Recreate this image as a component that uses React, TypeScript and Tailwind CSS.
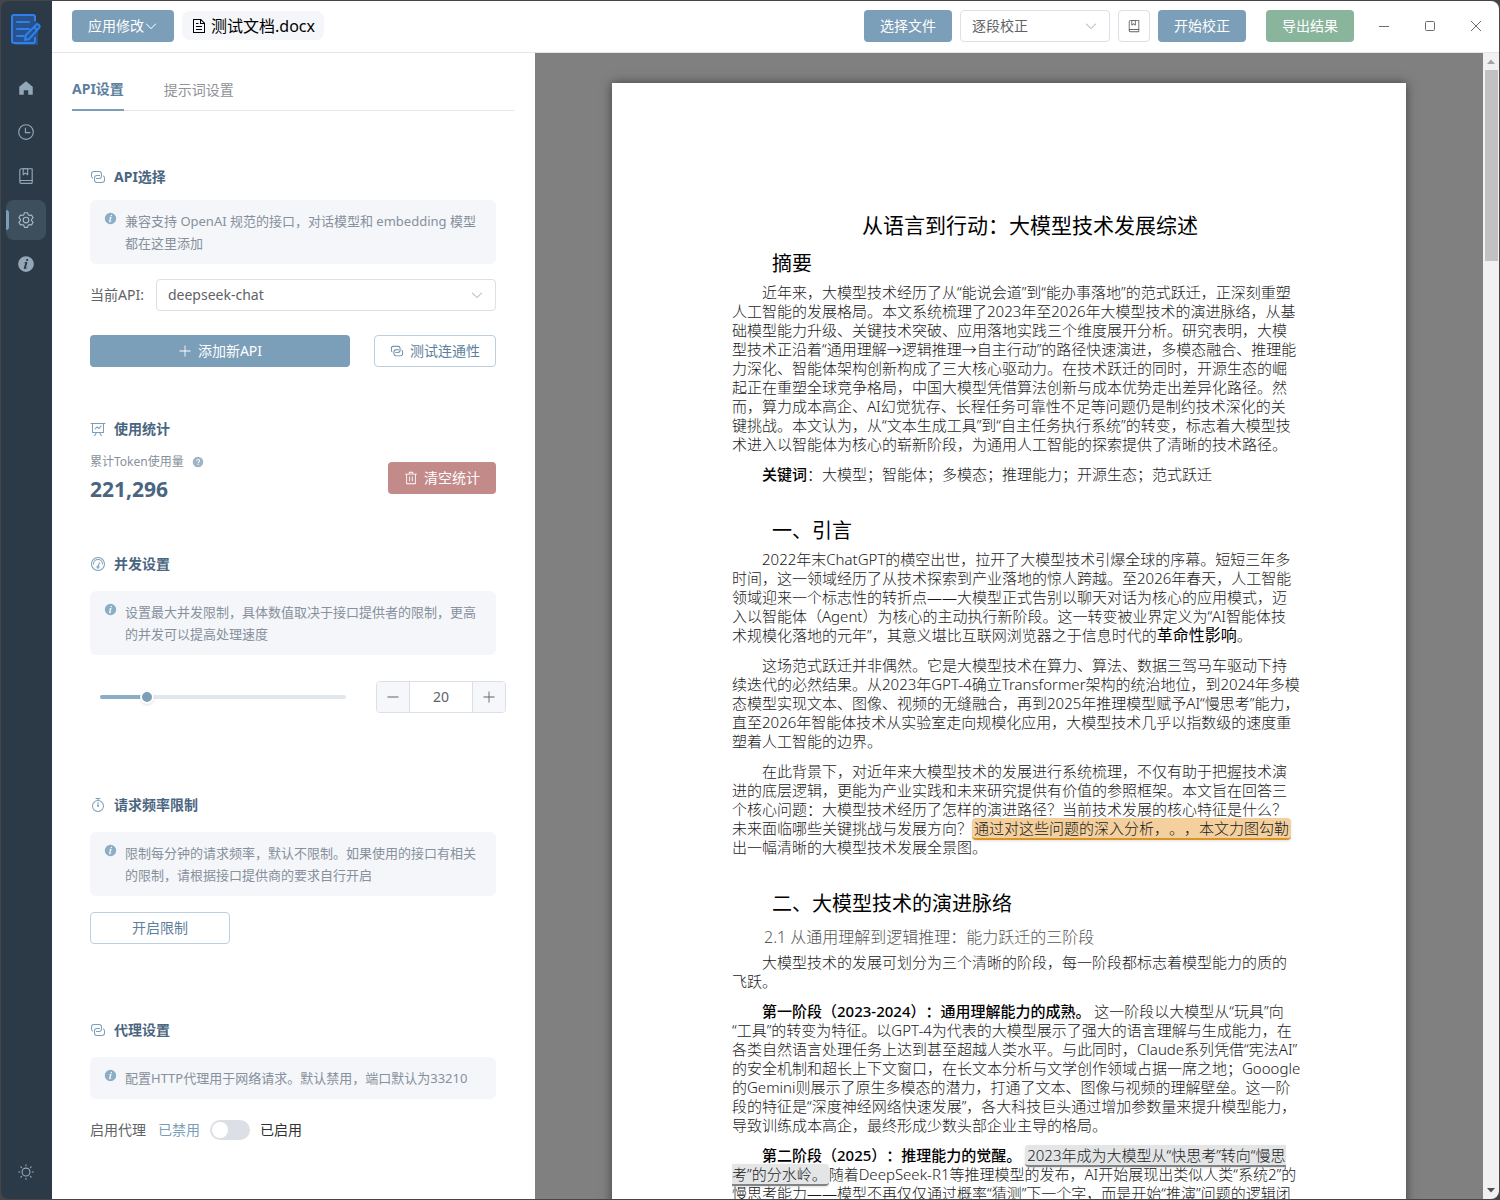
import React, { useState } from 'react';

interface IconProps {
  d: string[];
  size?: number;
  className?: string;
}

const icons = {
  arrowDown: ['M831.872 340.864 512 652.672 192.128 340.864a30.592 30.592 0 0 0-42.752 0 29.12 29.12 0 0 0 0 41.6L489.664 714.24a32 32 0 0 0 44.672 0l340.288-331.712a29.12 29.12 0 0 0 0-41.728 30.592 30.592 0 0 0-42.752 0z'],
  home: ['M512 128 128 447.936V896h255.936V640H640v256h255.936V447.936z'],
  clock: [
    'M512 896a384 384 0 1 0 0-768 384 384 0 0 0 0 768m0 64a448 448 0 1 1 0-896 448 448 0 0 1 0 896',
    'M480 256a32 32 0 0 1 32 32v256a32 32 0 0 1-64 0V288a32 32 0 0 1 32-32',
    'M480 512h256q32 0 32 32t-32 32H480q-32 0-32-32t32-32',
  ],
  collection: [
    'M192 736h640V128H256a64 64 0 0 0-64 64zm64-672h608a32 32 0 0 1 32 32v672a32 32 0 0 1-32 32H160l-32 57.536V192A128 128 0 0 1 256 64',
    'M240 800a48 48 0 1 0 0 96h592v-96zm0-64h656v160a64 64 0 0 1-64 64H240a112 112 0 0 1 0-224m144-608v250.88l96-76.8 96 76.8V128zm-64-64h320v381.44a32 32 0 0 1-51.968 24.96L480 384l-108.032 86.4A32 32 0 0 1 320 445.44z',
  ],
  setting: [
    'M600.704 64a32 32 0 0 1 30.464 22.208l35.2 109.376c14.784 7.232 28.928 15.36 42.432 24.512l112.384-24.192a32 32 0 0 1 34.432 15.36L944.32 364.8a32 32 0 0 1-4.032 37.504l-77.12 85.12a357.12 357.12 0 0 1 0 49.024l77.12 85.248a32 32 0 0 1 4.032 37.504l-88.704 153.6a32 32 0 0 1-34.432 15.296L708.8 803.904c-13.44 9.088-27.648 17.28-42.368 24.512l-35.264 109.376A32 32 0 0 1 600.704 960H423.296a32 32 0 0 1-30.464-22.208L357.696 828.48a351.616 351.616 0 0 1-42.56-24.64l-112.32 24.256a32 32 0 0 1-34.432-15.36L79.68 659.2a32 32 0 0 1 4.032-37.504l77.12-85.248a357.12 357.12 0 0 1 0-48.896l-77.12-85.248A32 32 0 0 1 79.68 364.8l88.704-153.6a32 32 0 0 1 34.432-15.296l112.32 24.256c13.568-9.152 27.776-17.408 42.56-24.64l35.2-109.312A32 32 0 0 1 423.232 64H600.64zm-23.424 64H446.72l-36.352 113.088-24.512 11.968a294.113 294.113 0 0 0-34.816 20.096l-22.656 15.36-116.224-25.088-65.28 113.152 79.68 88.192-1.92 27.136a293.12 293.12 0 0 0 0 40.192l1.92 27.136-79.808 88.192 65.344 113.152 116.224-25.024 22.656 15.296a294.113 294.113 0 0 0 34.816 20.096l24.512 11.968L446.72 896h130.688l36.48-113.152 24.448-11.904a288.282 288.282 0 0 0 34.752-20.096l22.592-15.296 116.288 25.024 65.28-113.152-79.744-88.192 1.92-27.136a293.12 293.12 0 0 0 0-40.256l-1.92-27.136 79.808-88.128-65.344-113.152-116.288 24.96-22.592-15.232a287.616 287.616 0 0 0-34.752-20.096l-24.448-11.904L577.344 128zM512 320a192 192 0 1 1 0 384 192 192 0 0 1 0-384m0 64a128 128 0 1 0 0 256 128 128 0 0 0 0-256',
  ],
  info: [
    'M512 64a448 448 0 1 1 0 896.064A448 448 0 0 1 512 64m67.2 275.072c33.28 0 60.288-23.104 60.288-57.344s-27.072-57.344-60.288-57.344c-33.28 0-60.16 23.104-60.16 57.344s26.88 57.344 60.16 57.344M590.912 699.2c0-6.848 2.368-24.64 1.024-34.752l-52.608 60.544c-10.88 11.456-24.512 19.392-30.912 17.28a12.992 12.992 0 0 1-8.256-14.72l87.68-276.992c7.168-35.136-12.544-67.2-54.336-71.296-44.096 0-108.992 44.736-148.48 101.504 0 6.784-1.28 23.68.064 33.792l52.544-60.608c10.88-11.328 23.552-19.328 29.952-17.152a12.8 12.8 0 0 1 7.808 16.128L388.48 728.576c-10.048 32.256 8.96 63.872 55.04 71.04 67.84 0 107.904-43.648 147.456-100.416z',
  ],
  sunny: [
    'M512 704a192 192 0 1 0 0-384 192 192 0 0 0 0 384m0 64a256 256 0 1 1 0-512 256 256 0 0 1 0 512m0-704a32 32 0 0 1 32 32v64a32 32 0 0 1-64 0V96a32 32 0 0 1 32-32m0 768a32 32 0 0 1 32 32v64a32 32 0 1 1-64 0v-64a32 32 0 0 1 32-32M195.2 195.2a32 32 0 0 1 45.248 0l45.248 45.248a32 32 0 1 1-45.248 45.248L195.2 240.448a32 32 0 0 1 0-45.248zm543.104 543.104a32 32 0 0 1 45.248 0l45.248 45.248a32 32 0 0 1-45.248 45.248l-45.248-45.248a32 32 0 0 1 0-45.248M64 512a32 32 0 0 1 32-32h64a32 32 0 0 1 0 64H96a32 32 0 0 1-32-32m768 0a32 32 0 0 1 32-32h64a32 32 0 1 1 0 64h-64a32 32 0 0 1-32-32M195.2 828.8a32 32 0 0 1 0-45.248l45.248-45.248a32 32 0 0 1 45.248 45.248L240.448 828.8a32 32 0 0 1-45.248 0zm543.104-543.104a32 32 0 0 1 0-45.248l45.248-45.248a32 32 0 0 1 45.248 45.248l-45.248 45.248a32 32 0 0 1-45.248 0',
  ],
  connection: [
    'M640 384v64H448a128 128 0 0 0-128 128v128a128 128 0 0 0 128 128h320a128 128 0 0 0 128-128V576a128 128 0 0 0-64-110.848V394.88c74.56 26.368 128 97.472 128 181.056v128a192 192 0 0 1-192 192H448a192 192 0 0 1-192-192V576a192 192 0 0 1 192-192z',
    'M384 640v-64h192a128 128 0 0 0 128-128V320a128 128 0 0 0-128-128H256a128 128 0 0 0-128 128v128a128 128 0 0 0 64 110.848v70.272A192.064 192.064 0 0 1 64 448V320a192 192 0 0 1 192-192h320a192 192 0 0 1 192 192v128a192 192 0 0 1-192 192z',
  ],
  dataLine: [
    'M359.168 768H160a32 32 0 0 1-32-32V192H64a32 32 0 0 1 0-64h896a32 32 0 1 1 0 64h-64v544a32 32 0 0 1-32 32H665.216l110.848 192h-73.856L591.36 768H433.024L322.176 960H248.32zM832 192H192v512h640zM342.656 534.656a32 32 0 1 1-45.312-45.312L444.992 341.76l125.44 94.08L679.04 300.032a32 32 0 1 1 49.92 39.936L581.632 524.224 451.008 426.24 342.656 534.592z',
  ],
  question: [
    'M512 64a448 448 0 1 1 0 896 448 448 0 0 1 0-896m23.744 191.488c-52.096 0-92.928 14.784-123.2 44.352-30.976 29.568-45.76 70.4-45.76 122.496h80.256c0-29.568 5.632-52.8 17.6-68.992 13.376-19.712 35.2-28.864 66.176-28.864 23.936 0 42.944 6.336 56.32 19.712 12.672 13.376 19.712 31.68 19.712 54.912 0 17.6-6.336 34.496-19.008 49.984l-8.448 9.856c-45.76 40.832-73.216 70.4-82.368 89.408-9.856 19.008-14.08 42.24-14.08 68.992v9.856h80.96v-9.856c0-16.896 3.52-31.68 10.56-45.76 6.336-12.672 15.488-24.64 28.16-35.2 33.792-29.568 54.208-48.576 60.544-55.616 16.896-22.528 26.048-51.392 26.048-86.592 0-42.944-14.08-76.736-42.24-101.376-28.16-25.344-65.472-37.312-111.232-37.312zm-12.672 406.208a54.272 54.272 0 0 0-38.72 14.784 49.408 49.408 0 0 0-15.488 38.016c0 15.488 4.928 28.16 15.488 38.016A54.848 54.848 0 0 0 523.072 768c15.488 0 28.16-4.928 38.72-14.784a51.52 51.52 0 0 0 16.192-38.72 51.968 51.968 0 0 0-15.488-38.016 55.936 55.936 0 0 0-39.424-14.784z',
  ],
  trash: [
    'M160 256H96a32 32 0 0 1 0-64h256V95.936a32 32 0 0 1 32-32h256a32 32 0 0 1 32 32V192h256a32 32 0 1 1 0 64h-64v672a32 32 0 0 1-32 32H192a32 32 0 0 1-32-32zm448-64v-64H416v64zM224 896h576V256H224zm192-128a32 32 0 0 1-32-32V416a32 32 0 0 1 64 0v320a32 32 0 0 1-32 32m192 0a32 32 0 0 1-32-32V416a32 32 0 0 1 64 0v320a32 32 0 0 1-32 32',
  ],
  odometer: [
    'M512 896a384 384 0 1 0 0-768 384 384 0 0 0 0 768m0 64a448 448 0 1 1 0-896 448 448 0 0 1 0 896',
    'M192 512a320 320 0 1 1 640 0 32 32 0 1 1-64 0 256 256 0 1 0-512 0 32 32 0 0 1-64 0',
    'M570.432 627.84A96 96 0 1 1 509.568 608l60.992-187.776A32 32 0 1 1 631.424 440l-60.992 187.776zM502.08 734.464a32 32 0 1 0 19.84-60.928 32 32 0 0 0-19.84 60.928',
  ],
  timer: [
    'M512 896a320 320 0 1 0 0-640 320 320 0 0 0 0 640m0 64a384 384 0 1 1 0-768 384 384 0 0 1 0 768',
    'M512 320a32 32 0 0 1 32 32l-.512 224a32 32 0 1 1-64 0L480 352a32 32 0 0 1 32-32',
    'M448 576a64 64 0 1 0 128 0 64 64 0 1 0-128 0m96-448v128h-64V128h-96a32 32 0 0 1 0-64h256a32 32 0 1 1 0 64z',
  ],
  plus: ['M480 480V128a32 32 0 0 1 64 0v352h352a32 32 0 1 1 0 64H544v352a32 32 0 1 1-64 0V544H128a32 32 0 0 1 0-64z'],
  minus: ['M128 544h768a32 32 0 1 0 0-64H128a32 32 0 0 0 0 64'],
  document: [
    'M832 384H576V128H192v768h640zm-26.496-64L640 154.496V320zM160 64h480l256 256v608a32 32 0 0 1-32 32H160a32 32 0 0 1-32-32V96a32 32 0 0 1 32-32m160 448h384v64H320zm0-192h160v64H320zm0 384h384v64H320z',
  ],
};

const Icon: React.FC<IconProps> = ({ d, size = 16, className = '' }) => (
  <svg width={size} height={size} viewBox="0 0 1024 1024" fill="currentColor" className={`shrink-0 ${className}`} aria-hidden="true">
    {d.map((path) => (
      <path key={path} d={path} />
    ))}
  </svg>
);

const Logo = () => (
  <svg width="32" height="34" viewBox="0 0 32 34" fill="none" aria-hidden="true">
    <path d="M3 3h23v5l4 4-2 4v16H6l-3-2z" fill="#28528a" />
    <path d="M25 8V4a2 2 0 0 0-2-2H4a2 2 0 0 0-2 2v24a2 2 0 0 0 2 2h19a2 2 0 0 0 2-2v-4" stroke="#2f80ed" strokeWidth="2" />
    <path d="M7 9h12M7 16h12M7 23h7" stroke="#2f80ed" strokeWidth="2" strokeLinecap="round" />
    <path d="m15 27 1-5L26 12a2 2 0 0 1 3 0 2 2 0 0 1 0 3L19 26z" stroke="#2f80ed" strokeWidth="2" strokeLinejoin="round" fill="#28528a" />
    <path d="m24 14 3 3" stroke="#2f80ed" strokeWidth="2" />
  </svg>
);

const navItems = [
  { id: 'home', label: '首页', icon: icons.home },
  { id: 'history', label: '历史', icon: icons.clock },
  { id: 'dictionary', label: '词库', icon: icons.collection },
  { id: 'settings', label: '设置', icon: icons.setting },
  { id: 'about', label: '关于', icon: icons.info },
];

const Sidebar = () => (
  <nav className="flex w-[51px] shrink-0 flex-col items-center bg-[#2c3a47] pt-3 pr-px pb-[18px] text-[#94a7b8]">
    <Logo />
    <div className="mt-[21px] flex flex-col gap-1">
      {navItems.map((item) => (
        <button
          key={item.id}
          aria-label={item.label}
          className={`relative flex size-10 items-center justify-center rounded-lg ${item.id === 'settings' ? 'bg-[#3d4e5d] text-[#a9bac9]' : ''}`}
        >
          {item.id === 'settings' && <span className="absolute top-[10px] left-0 h-5 w-[3px] rounded-r-sm bg-[#7b9eb9]" />}
          <Icon d={item.icon} size={18} />
        </button>
      ))}
    </div>
    <button aria-label="主题" className="mt-auto">
      <Icon d={icons.sunny} size={18} />
    </button>
  </nav>
);

const TopBar = () => (
  <header className="flex h-[52px] shrink-0 items-center border-b border-[#e2e4ee] bg-white pb-[2px] pl-5 text-sm">
    <button className="flex h-8 items-center rounded bg-[#7b9eb9] px-4 text-white">
      应用修改
      <Icon d={icons.arrowDown} size={14} />
    </button>
    <div className="ml-2 flex h-[29px] items-center gap-1 rounded-lg bg-[#f4f6fa] px-[9px] text-base text-black">
      <Icon d={icons.document} size={16} />
      测试文档.docx
    </div>
    <div className="ml-auto flex items-center gap-2">
      <button className="h-8 w-[88px] rounded bg-[#7b9eb9] text-white">选择文件</button>
      <div className="relative">
        <select aria-label="校正方式" className="h-8 w-[150px] appearance-none rounded border border-[#dcdfe6] bg-white px-[11px] text-[#606266]">
          <option>逐段校正</option>
        </select>
        <Icon d={icons.arrowDown} size={14} className="pointer-events-none absolute top-[9px] right-3 text-[#a8abb2]" />
      </div>
      <button aria-label="词库" className="flex h-8 w-8 items-center justify-center rounded border border-[#dcdfe6] text-[#606266]">
        <Icon d={icons.collection} size={14} />
      </button>
      <button className="h-8 w-[88px] rounded bg-[#7b9eb9] text-white">开始校正</button>
      <button className="ml-3 h-8 w-[88px] rounded bg-[#8ab59d] text-white">导出结果</button>
    </div>
    <div className="ml-[7px] flex text-[#6b6b6b]">
      <button aria-label="最小化" className="flex h-8 w-[46px] items-center justify-center">
        <svg width="12" height="12" viewBox="0 0 12 12" stroke="currentColor"><path d="M1 6.500h10" /></svg>
      </button>
      <button aria-label="最大化" className="flex h-8 w-[46px] items-center justify-center">
        <svg width="12" height="12" viewBox="0 0 12 12" stroke="currentColor" fill="none"><rect x="1.500" y="1.500" width="9" height="9" rx="1" /></svg>
      </button>
      <button aria-label="关闭" className="flex h-8 w-[46px] items-center justify-center">
        <svg width="12" height="12" viewBox="0 0 12 12" stroke="currentColor"><path d="m1 1 10 10M11 1 1 11" /></svg>
      </button>
    </div>
  </header>
);

const SectionTitle: React.FC<{ icon: string[]; children: React.ReactNode }> = ({ icon, children }) => (
  <h3 className="flex h-6 items-center gap-2 text-sm font-bold text-[#4a6580]">
    <Icon d={icon} className="text-[#7b9eb9]" />
    {children}
  </h3>
);

const Hint: React.FC<{ children: React.ReactNode }> = ({ children }) => (
  <div className="flex gap-2 rounded-md bg-[#f4f6fa] px-[14px] py-[10px] text-[13px] leading-[22px] text-[#87909c]">
    <Icon d={icons.info} size={13} className="mt-[2px] text-[#8aaec5]" />
    <p>{children}</p>
  </div>
);

const SettingsPanel = () => {
  const [limit, setLimit] = useState(20);
  const [proxy, setProxy] = useState(false);
  const percent = ((limit - 1) / 99) * 100;

  return (
    <aside className="w-[483px] shrink-0 overflow-hidden bg-white pr-[21px] pl-5 text-sm text-[#606266]">
      <div className="mt-4 flex h-[42px] gap-10 border-b border-[#e4e7ed]">
        <button className="-mb-px border-b-2 border-[#7b9eb9] font-bold text-[#5d7f9d]">API设置</button>
        <button className="text-[#909399]">提示词设置</button>
      </div>

      <div className="px-[18px]">
        <section className="mt-[54px]">
          <SectionTitle icon={icons.connection}>API选择</SectionTitle>
          <div className="mt-[11px]">
            <Hint>兼容支持 OpenAI 规范的接口，对话模型和 embedding 模型<br />都在这里添加</Hint>
          </div>
          <div className="mt-[15px] flex items-center gap-3">
            <label htmlFor="api">当前API:</label>
            <div className="relative flex-1">
              <select id="api" className="h-8 w-full appearance-none rounded border border-[#dcdfe6] bg-white px-[11px]">
                <option>deepseek-chat</option>
              </select>
              <Icon d={icons.arrowDown} size={14} className="pointer-events-none absolute top-[9px] right-3 text-[#a8abb2]" />
            </div>
          </div>
          <div className="mt-6 flex gap-6">
            <button className="flex h-8 flex-1 items-center justify-center gap-[6px] rounded bg-[#7b9eb9] text-white">
              <Icon d={icons.plus} size={14} />
              添加新API
            </button>
            <button className="flex h-8 w-[122px] items-center justify-center gap-[6px] rounded border border-[#bdcedc] text-[#5d7f9d]">
              <Icon d={icons.connection} size={14} />
              测试连通性
            </button>
          </div>
        </section>

        <section className="mt-[50px]">
          <SectionTitle icon={icons.dataLine}>使用统计</SectionTitle>
          <div className="mt-3 flex items-center justify-between">
            <div>
              <div className="flex h-[18px] items-center gap-2 text-xs text-[#87909c]">
                累计Token使用量
                <Icon d={icons.question} size={12} className="text-[#9db3c6]" />
              </div>
              <div className="mt-1 h-7 text-[21px] leading-7 font-bold text-[#4a6580]">221,296</div>
            </div>
            <button className="flex h-8 w-[108px] items-center justify-center gap-[6px] rounded bg-[#c38a8a] text-white">
              <Icon d={icons.trash} size={14} />
              清空统计
            </button>
          </div>
        </section>

        <section className="mt-[49px]">
          <SectionTitle icon={icons.odometer}>并发设置</SectionTitle>
          <div className="mt-[15px]">
            <Hint>设置最大并发限制，具体数值取决于接口提供者的限制，更高<br />的并发可以提高处理速度</Hint>
          </div>
          <div className="mt-[26px] -mr-[10px] ml-[10px] flex items-center gap-[30px]">
            <div className="relative flex h-8 flex-1 items-center">
              <div className="h-1 w-full rounded-full bg-[#e1e7ec]">
                <div className="h-1 rounded-full bg-[#8aaec5]" style={{ width: `${percent}%` }} />
              </div>
              <span
                className="pointer-events-none absolute size-[14px] -translate-x-1/2 rounded-full border-2 border-white bg-[#7b9eb9] shadow"
                style={{ left: `${percent}%` }}
              />
              <input
                type="range"
                aria-label="最大并发"
                min={1}
                max={100}
                value={limit}
                onChange={(e) => setLimit(Number(e.target.value))}
                className="absolute inset-0 w-full cursor-pointer opacity-0"
              />
            </div>
            <div className="flex h-8 w-[130px] overflow-hidden rounded border border-[#dcdfe6]">
              <button aria-label="减少" onClick={() => setLimit(Math.max(1, limit - 1))} className="flex w-8 items-center justify-center bg-[#f5f7fa]">
                <Icon d={icons.minus} size={14} />
              </button>
              <input
                aria-label="并发数"
                value={limit}
                onChange={(e) => setLimit(Number(e.target.value) || 1)}
                className="w-0 flex-1 border-x border-[#dcdfe6] text-center"
              />
              <button aria-label="增加" onClick={() => setLimit(Math.min(100, limit + 1))} className="flex w-8 items-center justify-center bg-[#f5f7fa]">
                <Icon d={icons.plus} size={14} />
              </button>
            </div>
          </div>
        </section>

        <section className="mt-20">
          <SectionTitle icon={icons.timer}>请求频率限制</SectionTitle>
          <div className="mt-[15px]">
            <Hint>限制每分钟的请求频率，默认不限制。如果使用的接口有相关<br />的限制，请根据接口提供商的要求自行开启</Hint>
          </div>
          <button className="mt-4 h-8 w-[140px] rounded border border-[#bdcedc] text-[#5d7f9d]">开启限制</button>
        </section>

        <section className="mt-[74px]">
          <SectionTitle icon={icons.connection}>代理设置</SectionTitle>
          <div className="mt-[15px]">
            <Hint>配置HTTP代理用于网络请求。默认禁用，端口默认为33210</Hint>
          </div>
          <div className="mt-[15px] flex h-8 items-center">
            <label htmlFor="proxy">启用代理</label>
            <span className="ml-3 text-[#7b9eb9]">已禁用</span>
            <span className="relative mx-[10px] h-5 w-10 rounded-full bg-[#dcdfe6]">
              <span className={`absolute top-[2px] size-4 rounded-full bg-white ${proxy ? 'right-[2px]' : 'left-[2px]'}`} />
              <input id="proxy" type="checkbox" checked={proxy} onChange={() => setProxy(!proxy)} className="absolute inset-0 size-full cursor-pointer opacity-0" />
            </span>
            <span className="text-[#303133]">已启用</span>
          </div>
        </section>
      </div>
    </aside>
  );
};

const Para: React.FC<{ children: React.ReactNode }> = ({ children }) => (
  <p className="mb-[11px] indent-[30px]">{children}</p>
);

const Heading: React.FC<{ children: React.ReactNode; first?: boolean }> = ({ children, first }) => (
  <h2 className={`mb-[6px] pl-10 text-xl leading-[26px] font-normal text-black ${first ? 'mt-3' : 'mt-[34px]'}`}>{children}</h2>
);

const DocumentPage = () => (
  <article className="mx-auto w-[794px] bg-white px-[120px] pt-32 text-[15px] leading-[19px] font-light whitespace-pre text-[#1a1a1a] shadow-[0_0_10px_rgba(0,0,0,0.5)] [text-spacing-trim:space-all]">
    <h1 className="text-center indent-[42px] text-[21px] leading-7 font-normal text-black">从语言到行动：大模型技术发展综述</h1>

    <Heading first>摘要</Heading>
    <Para>
      {`近年来，大模型技术经历了从“能说会道”到“能办事落地”的范式跃迁，正深刻重塑
人工智能的发展格局。本文系统梳理了2023年至2026年大模型技术的演进脉络，从基
础模型能力升级、关键技术突破、应用落地实践三个维度展开分析。研究表明，大模
型技术正沿着“通用理解→逻辑推理→自主行动”的路径快速演进，多模态融合、推理能
力深化、智能体架构创新构成了三大核心驱动力。在技术跃迁的同时，开源生态的崛
起正在重塑全球竞争格局，中国大模型凭借算法创新与成本优势走出差异化路径。然
而，算力成本高企、AI幻觉犹存、长程任务可靠性不足等问题仍是制约技术深化的关
键挑战。本文认为，从“文本生成工具”到“自主任务执行系统”的转变，标志着大模型技
术进入以智能体为核心的崭新阶段，为通用人工智能的探索提供了清晰的技术路径。`}
    </Para>
    <Para>
      <strong className="font-medium text-black">关键词</strong>：大模型；智能体；多模态；推理能力；开源生态；范式跃迁
    </Para>

    <Heading>一、引言</Heading>
    <Para>
      {`2022年末ChatGPT的横空出世，拉开了大模型技术引爆全球的序幕。短短三年多
时间，这一领域经历了从技术探索到产业落地的惊人跨越。至2026年春天，人工智能
领域迎来一个标志性的转折点——大模型正式告别以聊天对话为核心的应用模式，迈
入以智能体（Agent）为核心的主动执行新阶段。这一转变被业界定义为“AI智能体技
术规模化落地的元年”，其意义堪比互联网浏览器之于信息时代的`}
      <span className="text-base leading-[19px] font-normal text-black">革命性影响</span>。
    </Para>
    <Para>
      {`这场范式跃迁并非偶然。它是大模型技术在算力、算法、数据三驾马车驱动下持
续迭代的必然结果。从2023年GPT-4确立Transformer架构的统治地位，到2024年多模
态模型实现文本、图像、视频的无缝融合，再到2025年推理模型赋予AI“慢思考”能力，
直至2026年智能体技术从实验室走向规模化应用，大模型技术几乎以指数级的速度重
塑着人工智能的边界。`}
    </Para>
    <Para>
      {`在此背景下，对近年来大模型技术的发展进行系统梳理，不仅有助于把握技术演
进的底层逻辑，更能为产业实践和未来研究提供有价值的参照框架。本文旨在回答三
个核心问题：大模型技术经历了怎样的演进路径？当前技术发展的核心特征是什么？
未来面临哪些关键挑战与发展方向？`}
      <mark className="rounded-sm border-b-2 border-[#dc9427] bg-[#f3d09e] px-[2px] text-[#1a1a1a] shadow-sm">通过对这些问题的深入分析，。，本文力图勾勒</mark>
      {`
出一幅清晰的大模型技术发展全景图。`}
    </Para>

    <Heading>二、大模型技术的演进脉络</Heading>
    <h3 className="mt-[10px] mb-[6px] pl-8 text-base leading-5 font-light text-[#555]">2.1 从通用理解到逻辑推理：能力跃迁的三阶段</h3>
    <Para>
      {`大模型技术的发展可划分为三个清晰的阶段，每一阶段都标志着模型能力的质的
飞跃。`}
    </Para>
    <Para>
      <strong className="font-medium text-black">第一阶段（2023-2024）：通用理解能力的成熟。</strong>
      {` 这一阶段以大模型从“玩具”向
“工具”的转变为特征。以GPT-4为代表的大模型展示了强大的语言理解与生成能力，在
各类自然语言处理任务上达到甚至超越人类水平。与此同时，Claude系列凭借“宪法AI”
的安全机制和超长上下文窗口，在长文本分析与文学创作领域占据一席之地；Gooogle
的Gemini则展示了原生多模态的潜力，打通了文本、图像与视频的理解壁垒。这一阶
段的特征是“深度神经网络快速发展”，各大科技巨头通过增加参数量来提升模型能力，
导致训练成本高企，最终形成少数头部企业主导的格局。`}
    </Para>
    <Para>
      <strong className="font-medium text-black">第二阶段（2025）：推理能力的觉醒。</strong>{' '}
      <mark className="rounded-sm border-b-2 border-[#808487] bg-[#e4e5e7] px-[2px] text-[#1a1a1a] shadow-sm">
        {`2023年成为大模型从“快思考”转向“慢思
考”的分水岭。`}
      </mark>
      {`随着DeepSeek-R1等推理模型的发布，AI开始展现出类似人类“系统2”的
慢思考能力——模型不再仅仅通过概率“猜测”下一个字，而是开始“推演”问题的逻辑闭
环。`}
    </Para>
  </article>
);

const Scrollbar = () => (
  <div className="flex w-4 shrink-0 flex-col items-center bg-[#f1f1f1]" aria-hidden="true">
    <svg width="16" height="17" viewBox="0 0 16 17"><path d="M4 11h8L8 6.500z" fill="#a3a3a3" /></svg>
    <div className="h-[191px] w-[13px] bg-[#c1c1c1]" />
    <svg className="mt-auto" width="16" height="17" viewBox="0 0 16 17"><path d="M4 6h8l-4 4.500z" fill="#505050" /></svg>
  </div>
);

export default function App() {
  return (
    <div className="h-screen bg-[#434549] p-px font-['Noto_Sans','Noto_Sans_CJK_SC',sans-serif]" lang="zh-CN">
      <div className="flex h-full overflow-hidden rounded-lg">
        <Sidebar />
        <div className="flex min-w-0 flex-1 flex-col">
          <TopBar />
          <div className="flex min-h-0 flex-1">
            <SettingsPanel />
            <main className="min-w-0 flex-1 overflow-hidden bg-[#808080] pt-[30px]">
              <DocumentPage />
            </main>
            <Scrollbar />
          </div>
        </div>
      </div>
    </div>
  );
}
